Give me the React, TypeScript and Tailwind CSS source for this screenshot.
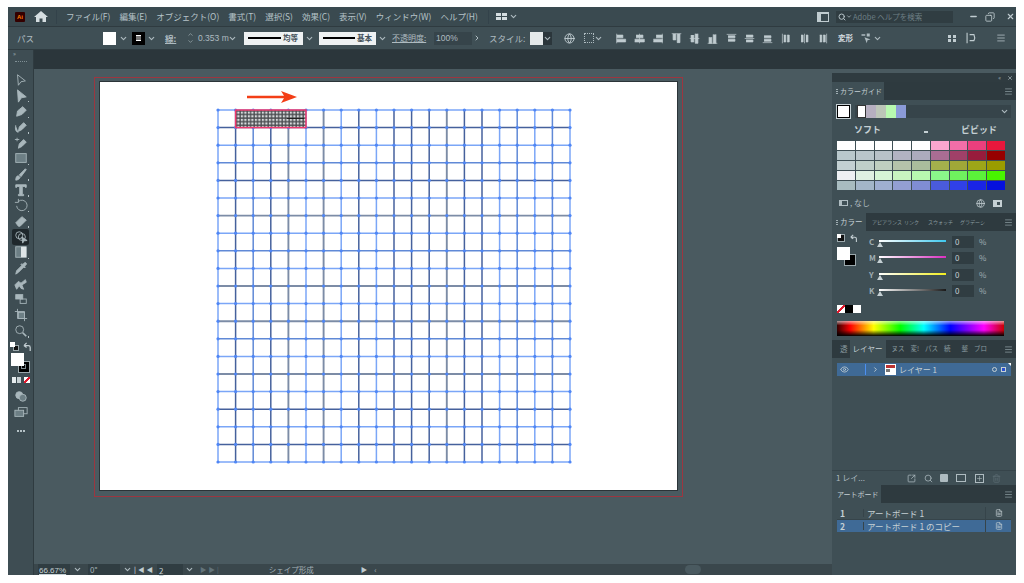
import { ChevronDown, ChevronRight, Eye, Menu, Search, Minus, X, Plus, Trash2, Copy, Globe, FileText, SquareArrowOutUpRight } from "lucide-react";

const menus = ["ファイル(F)", "編集(E)", "オブジェクト(O)", "書式(T)", "選択(S)", "効果(C)", "表示(V)", "ウィンドウ(W)", "ヘルプ(H)"];

const swatches = [
  ["#ffffff", "#ffffff", "#ffffff", "#ffffff", "#ffffff", "#f9a6cf", "#f26ea8", "#ea3f7d", "#e8173c"],
  ["#b9c8cc", "#b9c6cb", "#b8c2c8", "#b2b3c2", "#acabbd", "#a96d93", "#a04068", "#981c3c", "#960000"],
  ["#c3d0d2", "#bfcfc9", "#bfcfc0", "#b5c3aa", "#aabd9c", "#a4b04c", "#a0a838", "#9da618", "#9a9c00"],
  ["#eef0f3", "#dff0e2", "#d6f5d6", "#c8f5c0", "#b8f9b0", "#8af78a", "#6ff25e", "#5bf23a", "#48f400"],
  ["#a8bcc0", "#a3b6c8", "#9fafd0", "#939fd3", "#808dd4", "#4a5bdc", "#3040e8", "#1a24e6", "#0510de"],
];

const lineStyle: Record<string, { c: string; w: number }> = {
  l: { c: "#7ba6f7", w: 1.5 },
  m: { c: "#6089d6", w: 1.5 },
  d: { c: "#46619c", w: 1.5 },
  g: { c: "#7c8ca6", w: 1.9 },
};
const vKinds = "ldmdglglmlddlgdmlmlml".split("");
vKinds[1] = "d"; vKinds[8] = "d"; vKinds[10] = "d"; vKinds[12] = "d"; vKinds[14] = "d"; vKinds[15] = "d";
const hKinds = "ldlmdlglmlglgmlglmldl".split("");
hKinds[1] = "d"; hKinds[4] = "d"; hKinds[17] = "d"; hKinds[19] = "d";

const STEP = 17.6;
const GX = 118;
const GY = 28;

function ArtworkGrid() {
  const idx = Array.from({ length: 21 }, (_, i) => i);
  return (
    <svg width="577" height="408" viewBox="0 0 577 408" className="block">
      <defs>
        <pattern id="dots" width="3.5" height="3.6" patternUnits="userSpaceOnUse">
          <rect width="3.5" height="3.6" fill="#4a4c50" />
          <rect x="0.8" y="0.8" width="2.2" height="2.2" fill="#d8dadc" />
        </pattern>
      </defs>
      {idx.map((i) => {
        const s = lineStyle[vKinds[i]];
        return <line key={"v" + i} x1={GX + i * STEP} x2={GX + i * STEP} y1={GY} y2={GY + 352} stroke={s.c} strokeWidth={s.w} />;
      })}
      {idx.map((i) => {
        const s = lineStyle[hKinds[i]];
        return <line key={"h" + i} y1={GY + i * STEP} y2={GY + i * STEP} x1={GX} x2={GX + 352} stroke={s.c} strokeWidth={s.w} />;
      })}
      {idx.map((i) =>
        idx.map((j) => <circle key={i + "-" + j} cx={GX + i * STEP} cy={GY + j * STEP} r="1.6" fill="#4f86f5" />),
      )}
      <rect x={GX + STEP} y={GY} width={STEP * 4} height={STEP} fill="url(#dots)" stroke="#f0386e" strokeWidth="1.5" />
      <line x1="187" x2="204" y1="36.5" y2="36.5" stroke="#222" strokeWidth="1" />
      <path d="M147 13.7H184L181 9L197 15L181 21L184 16.3H147Z" fill="#f33e16" />
    </svg>
  );
}

function Tool({ children, active, corner = true }: { children: React.ReactNode; active?: boolean; corner?: boolean }) {
  return (
    <div className={`relative h-[15.7px] w-[17px] flex items-center justify-center ${active ? "bg-[#1f282c] rounded-[2px]" : ""}`}>
      <svg width="14" height="14" viewBox="0 0 16 16" fill="#a9b7bc" stroke="#a9b7bc" strokeWidth="1">
        {children}
      </svg>
      {corner && <span className="absolute right-0 bottom-[1px] w-[1.5px] h-[1.5px] bg-[#b4c1c5]" />}
    </div>
  );
}

function Toolbox() {
  return (
    <div className="w-[26px] shrink-0 bg-[#3e4d53] border-r border-[#2f3b40] flex flex-col items-center">
      <div className="w-full h-[8px] pl-[5px] text-[6px] leading-[8px] text-[#9fb0b5]">»</div>
      <div className="w-[12px] h-[1px] mt-[3px] mb-[10px] border-t border-dotted border-[#7f8f95]" />
      <Tool corner={false}><path d="M4 2L13 9L8 10L5 14Z" fill="none" /></Tool>
      <Tool><path d="M4 1L14 9L8.5 10L5 15Z" /></Tool>
      <Tool><path d="M3 14L4 8L10 3L14 7L9 12Z" /></Tool>
      <Tool><path d="M5 13L6 8L11 3L14 6L9 11ZM2 6C1 10 2 14 5 14" /></Tool>
      <Tool corner={false}><path d="M5 14L6 9L11 4L14 7L9 12ZM1 4H6M3.5 2V6" /></Tool>
      <Tool><rect x="2" y="3" width="12" height="10" fill="#6d7f85" /></Tool>
      <Tool><path d="M2 15C2 12 3 10 5 10L7 12C6 14 4 15 2 15ZM6 9L13 2L14 3L8 11Z" /></Tool>
      <Tool><path d="M2 2H14V5H13L12 4H9.5V13H11V14.5H5V13H6.5V4H4L3 5H2Z" /></Tool>
      <Tool><path d="M5 4A6 6 0 1 1 3 9M5 1V5H1" fill="none" /></Tool>
      <Tool><path d="M2 10L9 3L14 7L7 14H5Z" /></Tool>
      <Tool active corner={false}><circle cx="6" cy="6" r="4" fill="none" /><circle cx="9" cy="8" r="4" fill="none" /><path d="M9 8L15 12L11 12.5L10 15Z" /></Tool>
      <Tool><rect x="2" y="2" width="12" height="12" fill="#6d7f85" /><rect x="8" y="2" width="6" height="12" fill="#dfe6e8" stroke="none" /></Tool>
      <Tool corner={false}><path d="M2 15L3 11L9 5L11 7L5 13ZM9 3L10 4L12 2C13 1 15 3 14 4L12 6L13 7L12 8L8 4Z" /></Tool>
      <Tool corner={false}><path d="M1 9L5 5L8 7L13 3L14 6L9 9L11 14L8 13L6 10L3 14Z" /></Tool>
      <Tool corner={false}><rect x="2" y="3" width="8" height="5" /><rect x="7" y="8" width="7" height="5" fill="none" /></Tool>
      <Tool corner={false}><path d="M4 1V12H15M1 4H12V15" fill="none" /><rect x="5" y="5" width="7" height="7" fill="#6d7f85" /></Tool>
      <Tool><circle cx="6.5" cy="6.5" r="4.5" fill="none" /><path d="M10 10L14 14" strokeWidth="2" /></Tool>
      <div className="w-[22px] h-[13px] mt-[1px] relative flex justify-between items-center">
        <span className="relative w-[9px] h-[9px]">
          <span className="absolute left-[3px] top-[3px] w-[6px] h-[6px] bg-[#111] border border-[#9aa7ab]" />
          <span className="absolute left-0 top-0 w-[5px] h-[5px] bg-white" />
        </span>
        <svg width="9" height="9" viewBox="0 0 10 10" fill="none" stroke="#c2cdd1" strokeWidth="1.4"><path d="M1 4L4 1M1 4L4 6M1 4H6Q8 4 8 6V10" /></svg>
      </div>
      <div className="relative w-[22px] h-[20px]">
        <span className="absolute left-[8px] top-[8px] w-[12px] h-[12px] bg-black border border-[#9aa7ab] flex items-center justify-center">
          <span className="block w-[5px] h-[5px] border border-[#7c8a8f]" />
        </span>
        <span className="absolute left-[1px] top-0 w-[13px] h-[13px] bg-white" />
      </div>
      <div className="flex gap-[1px] mt-[4px] h-[6px] items-stretch">
        <span className="w-[4px] bg-[#e6ecee]" />
        <span className="w-[4px] bg-[#c9d2d5]" />
        <span className="w-[1px]" />
        <span className="w-[6px] bg-[linear-gradient(135deg,white_38%,#e01a2e_38%,#e01a2e_62%,white_62%)]" />
      </div>
      <div className="mt-[5px]"><Tool corner={false}><circle cx="6" cy="7" r="4" /><circle cx="10" cy="10" r="4" fill="#6d7f85" /></Tool></div>
      <div className="mt-[1px]"><Tool corner={false}><rect x="5" y="3" width="10" height="7" fill="none" /><rect x="1" y="6" width="10" height="7" fill="#6d7f85" /></Tool></div>
      <div className="mt-[10px] flex gap-[1px]">
        <span className="w-[2px] h-[2px] bg-[#b4c1c5]" />
        <span className="w-[2px] h-[2px] bg-[#b4c1c5]" />
        <span className="w-[2px] h-[2px] bg-[#b4c1c5]" />
      </div>
    </div>
  );
}

function Chev({ className = "" }: { className?: string }) {
  return <ChevronDown size={9} strokeWidth={3} className={`shrink-0 text-[#aebbc0] ${className}`} />;
}

function StrokeBox({ label, w, line }: { label: string; w: string; line: string }) {
  return (
    <div className={`${w} h-[13px] bg-[#eef1f2] flex items-center px-[4px] gap-[2px]`}>
      <span className={`${line} shrink-0 h-[2px] bg-black`} />
      <span className="text-[7.5px] text-[#44525a] font-bold leading-none whitespace-nowrap">{label}</span>
    </div>
  );
}

const alignIcons = [
  "M1 1V15M1 3H10V7H1M1 9H14V13H1",
  "M8 1V15M3 3H13V7H3M1 9H15V13H1",
  "M15 1V15M6 3H15V7H6M2 9H15V13H2",
  "M1 1H15M3 1V10H7V1M9 1V14H13V1",
  "M1 8H15M3 3V13H7V3M9 1V15H13V1",
  "M1 15H15M3 6V15H7V6M9 2V15H13V2",
  "M1 2H15M3 4H13V7H3M3 9H13V12H3",
  "M1 8H15M3 3H13V6H3M3 10H13V13H3",
  "M1 14H15M3 4H13V7H3M3 9H13V12H3",
  "M2 1V15M4 3H7V13H4M9 3H12V13H9",
  "M8 1V15M3 3H6V13H3M10 3H13V13H10",
  "M14 1V15M4 3H7V13H4M9 3H12V13H9",
];

function ControlBar() {
  return (
    <div className="h-[23px] shrink-0 bg-[#3f4f55] border-b border-[#2f3b40] flex items-center text-[8.5px] text-[#aebbc0] relative">
      <span className="w-[95px] pl-[9px]">パス</span>
      <span className="w-[13px] h-[13px] bg-white" />
      <Chev className="ml-[3px]" />
      <span className="ml-[4px] w-[13px] h-[13px] bg-black flex items-center justify-center">
        <span className="w-[5px] h-[6px] border-y border-white bg-[#777]" />
      </span>
      <Chev className="ml-[2px]" />
      <span className="ml-[9px] w-[16px] underline font-bold">線:</span>
      <span className="ml-[5px] w-[8px] flex flex-col items-center text-[6px] leading-[6px]">
        <ChevronDown size={7} className="rotate-180" />
        <ChevronDown size={7} />
      </span>
      <span className="ml-[4px] w-[29px] whitespace-nowrap font-['Liberation_Sans',sans-serif]">0.353 m</span>
      <Chev className="ml-[1px]" />
      <span className="ml-[7px]"><StrokeBox label="均等" w="w-[59px]" line="w-[33px]" /></span>
      <Chev className="ml-[2px]" />
      <span className="ml-[5px]"><StrokeBox label="基本" w="w-[57px]" line="w-[32px]" /></span>
      <Chev className="ml-[2px]" />
      <span className="ml-[5px] w-[38px] underline whitespace-nowrap text-[8px]">不透明度:</span>
      <span className="ml-[4px] w-[38px] h-[13px] bg-[#36444a] pl-[2px] leading-[13px] font-['Liberation_Sans',sans-serif]">100%</span>
      <ChevronRight size={8} strokeWidth={3} className="ml-[1px]" />
      <span className="ml-[8px] w-[41px] whitespace-nowrap">スタイル:</span>
      <span className="w-[13px] h-[13px] bg-[#e4e9ea]" />
      <span className="w-[9px] h-[13px] bg-[#2b363b] flex items-center justify-center"><Chev /></span>
      <Globe size={11} className="ml-[12px] text-[#c0ccd0]" />
      <span className="ml-[9px] w-[10px] h-[10px] border border-dotted border-[#aebbc0]" />
      <Chev className="mr-[13px]" />
      <div className="flex">
        {alignIcons.map((d, i) => (
          <svg key={d} width="11" height="11" viewBox="0 0 16 16" fill="#c0ccd0" stroke="#c0ccd0" className={i === 2 || i === 5 || i === 8 ? "mr-[8px]" : "mr-[7px]"}>
            <path d={d} />
          </svg>
        ))}
      </div>
      <span className="ml-[3px] w-[15px] text-[7.5px] font-bold text-[#d5dde0]">変形</span>
      <svg width="12" height="12" viewBox="0 0 16 16" className="ml-[7px]" fill="#aebbc0"><path d="M2 3H7V5H2ZM9 2H13V6H9ZM6 7L14 10L10 11L9 15Z" /></svg>
      <Chev className="ml-[1px]" />
      <span className="ml-[66px] grid grid-cols-2 gap-[1px] w-[8px]">
        <i className="w-[3px] h-[3px] bg-[#c0ccd0]" /><i className="w-[3px] h-[3px] bg-[#c0ccd0]" /><i className="w-[3px] h-[3px] bg-[#c0ccd0]" /><i className="w-[3px] h-[3px] bg-[#c0ccd0]" />
      </span>
      <svg width="11" height="12" viewBox="0 0 12 14" className="ml-[9px]" fill="none" stroke="#c0ccd0" strokeWidth="1.3"><path d="M2 1V13M5 3H10L11 7L10 10H5" /></svg>
      <Menu size={10} className="ml-[20px] text-[#aebbc0]" />
    </div>
  );
}

function TitleBar() {
  return (
    <div className="h-[20px] shrink-0 bg-[#3a4a50] border-b border-[#2f3b40] flex items-center text-[8.5px] text-[#b6c3c8]">
      <span className="ml-[7px] w-[10px] h-[10px] rounded-[1px] bg-[#330000] text-[#ff7c00] text-[6px] leading-[10px] text-center font-bold font-['Liberation_Sans',sans-serif]">Ai</span>
      <svg width="14" height="13" viewBox="0 0 14 13" className="ml-[9px]" fill="#d5dde0"><path d="M7 1L14 7H12V12H8.5V8.5H5.5V12H2V7H0Z" /></svg>
      <span className="ml-[8px] mr-[9px] w-[1px] h-[14px] bg-[#33424a]" />
      <div className="flex gap-[9px] whitespace-nowrap w-[414px]">
        {menus.map((m) => <span key={m}>{m}</span>)}
      </div>
      <span className="ml-[8px] mr-[7px] w-[1px] h-[14px] bg-[#33424a]" />
      <span className="grid grid-cols-2 gap-[1px] w-[11px]">
        <i className="h-[3px] bg-[#d5dde0]" /><i className="h-[3px] bg-[#d5dde0]" /><i className="h-[3px] bg-[#d5dde0]" /><i className="h-[3px] bg-[#d5dde0]" />
      </span>
      <Chev className="ml-[2px]" />
      <span className="ml-[299px] w-[12px] h-[10px] border border-[#c0ccd0] border-l-[4px] border-t-[2px]" />
      <div className="ml-[7px] w-[117px] h-[12px] bg-[#303d42] flex items-center pl-[2px] text-[7.5px] text-[#6d7f85] whitespace-nowrap">
        <Search size={8} strokeWidth={3} className="text-[#b6c3c8]" />
        <Chev className="w-[6px]" />
        <span className="ml-[1px]">Adobe ヘルプを検索</span>
      </div>
      <Minus size={9} strokeWidth={4} className="ml-[16px] text-[#c0ccd0]" />
      <Copy size={10} className="ml-[7px] text-[#c0ccd0] -scale-x-100" />
      <X size={9} strokeWidth={3} className="ml-[11px] text-[#c0ccd0]" />
    </div>
  );
}

function StatusBar() {
  return (
    <div className="h-[11px] shrink-0 bg-[#3a474c] flex items-center text-[8px] text-[#a4b2b7] relative">
      <span className="ml-[4px] w-[32px] h-full bg-[#303d42] pl-[1px] leading-[14px] underline text-[#c5d0d4] font-['Liberation_Sans',sans-serif]">66.67%</span>
      <Chev className="ml-[3px]" />
      <span className="ml-[6px] w-[32px] h-full bg-[#303d42] pl-[2px] leading-[11px]">0°</span>
      <Chev className="ml-[3px]" />
      <span className="ml-[2px] text-[6.5px] font-bold text-[#c0ccd0] tracking-[2px] whitespace-nowrap">|◀◀</span>
      <span className="ml-[2px] w-[26px] h-full bg-[#303d42] pl-[2px] leading-[14px] underline text-[#c5d0d4]">2</span>
      <Chev className="ml-[2px]" />
      <span className="ml-[6px] text-[6.5px] text-[#62737a] tracking-[2px] whitespace-nowrap">▶▶|</span>
      <span className="ml-[48px] w-[92px] text-[7.5px]">シェイプ形成</span>
      <span className="text-[6.5px] text-[#c0ccd0]">▶</span>
      <span className="ml-[7px] text-[8px]">‹</span>
      <span className="absolute left-[651px] top-[1px] w-[16px] h-[9px] rounded-full bg-[#4a5a60]" />
    </div>
  );
}

function Grip() {
  return (
    <span className="mr-[2px] flex flex-col gap-[1px] shrink-0">
      <i className="block w-[2px] h-[1px] bg-[#9fadb2]" />
      <i className="block w-[2px] h-[1px] bg-[#9fadb2]" />
      <i className="block w-[2px] h-[1px] bg-[#9fadb2]" />
    </span>
  );
}

function Tab({ children, active, w }: { children: React.ReactNode; active?: boolean; w?: string }) {
  return (
    <span className={`h-full flex items-center whitespace-nowrap ${w ?? ""} ${active ? "bg-[#3f4f55] text-[#c5d0d4]" : "text-[#8a9a9f]"}`}>
      {children}
    </span>
  );
}

function TabBar({ children }: { children: React.ReactNode }) {
  return (
    <div className="h-[18px] shrink-0 bg-[#2e3a3f] flex items-center text-[7.5px] pr-[3px]">
      {children}
      <Menu size={9} className="ml-auto text-[#8a9a9f]" />
    </div>
  );
}

function ColorSlider({ label, track }: { label: string; track: string }) {
  return (
    <div className="flex items-center h-[16.3px] text-[8px] text-[#9fadb2]">
      <span className="w-[9px] font-bold">{label}</span>
      <div className="relative ml-[1px] w-[67px] h-[10px]">
        <span className={`absolute left-0 right-0 top-[3px] h-[2px] ${track}`} />
        <span className="absolute left-[-2px] top-[5px] w-0 h-0 border-x-[3px] border-x-transparent border-b-[5px] border-b-[#c5d0d4]" />
      </div>
      <span className="ml-[6px] w-[22px] h-[12px] bg-[#303d42] pl-[3px] leading-[12px] text-[#c5d0d4]">0</span>
      <span className="ml-[5px]">%</span>
    </div>
  );
}

function RightPanel() {
  return (
    <div className="w-[184px] shrink-0 mt-[4px] bg-[#3f4f55] flex flex-col text-[8px] text-[#b6c3c8]">
      <div className="h-[9px] shrink-0 bg-[#2f3b40] flex justify-end items-center gap-[6px] pr-[3px] text-[6px] text-[#9fadb2]">
        <span>«</span><X size={6} strokeWidth={3} />
      </div>

      <TabBar><Tab active w="w-[52px] pl-[4px]"><Grip /><span className="text-[7px]">カラーガイド</span></Tab></TabBar>
      <div className="h-[113px] shrink-0 px-[5px] pt-[5px] flex flex-col">
        <div className="flex items-center">
          <span className="w-[13px] h-[13px] bg-white border border-black outline outline-[#c5d0d4]" />
          <div className="ml-[5px] flex-1 h-[13px] bg-[#36444a] flex items-center justify-between pl-[2px] pr-[2px]">
            <div className="flex h-full">
              <span className="w-[9px] bg-white border border-[#333]" />
              <span className="w-[10px] bg-[#b6afc0]" />
              <span className="w-[10px] bg-[#bcc6b8]" />
              <span className="w-[10px] bg-[#b8f9b0]" />
              <span className="w-[10px] bg-[#8b9bd8]" />
            </div>
            <Chev />
          </div>
        </div>
        <div className="h-[23px] flex items-center font-bold text-[9px] text-[#c5d0d4]">
          <span className="ml-[17px] w-[70px]">ソフト</span>
          <span className="w-[4px] h-[2px] bg-[#c5d0d4] mt-[4px]" />
          <span className="ml-[33px]">ビビッド</span>
        </div>
        <div className="grid grid-cols-9 gap-[1px] w-[168px] h-[49px]">
          {swatches.flat().map((c, i) => <span key={i} style={{ backgroundColor: c }} />)}
        </div>
        <div className="mt-[7px] flex items-center text-[#aebbc0]">
          <span className="ml-[2px] w-[9px] h-[6px] border border-[#aebbc0] border-l-[3px]" />
          <span className="ml-[2px]">, なし</span>
          <Globe size={9} className="ml-auto text-[#c5d0d4]" />
          <span className="ml-[8px] mr-[9px] w-[9px] h-[7px] border-2 border-[#c5d0d4] border-l-[4px]" />
        </div>
      </div>

      <TabBar>
        <Tab active w="w-[34px] pl-[4px]"><Grip />カラー</Tab>
        <span className="text-[#8a9a9f] text-[5px] whitespace-nowrap flex">
          <span className="ml-[6px] w-[32px]">アピアランス</span>
          <span className="w-[24px]">リンク</span>
          <span className="w-[32px]">スウォッチ</span>
          <span className="w-[30px]">グラデーシ</span>
        </span>
      </TabBar>
      <div className="h-[109px] shrink-0 relative pl-[37px] pt-[3px]">
        <span className="absolute left-[5px] top-[3px] w-[8px] h-[8px] bg-[#111] border border-[#9aa7ab]" />
        <span className="absolute left-[5px] top-[3px] w-[4px] h-[4px] bg-white" />
        <svg width="8" height="8" viewBox="0 0 10 10" fill="none" stroke="#c2cdd1" strokeWidth="1.4" className="absolute left-[18px] top-[3px]"><path d="M1 4L4 1M1 4L4 6M1 4H6Q8 4 8 6V10" /></svg>
        <span className="absolute left-[12px] top-[23px] w-[12px] h-[12px] bg-black border border-[#9aa7ab]" />
        <span className="absolute left-[5px] top-[16px] w-[13px] h-[13px] bg-white" />
        <ColorSlider label="C" track="bg-[linear-gradient(to_right,white,#3fc8ee)]" />
        <ColorSlider label="M" track="bg-[linear-gradient(to_right,white,#d92fc0)]" />
        <ColorSlider label="Y" track="bg-[linear-gradient(to_right,white,#f2ee20)]" />
        <ColorSlider label="K" track="bg-[linear-gradient(to_right,white,#1a1a1a)]" />
        <div className="absolute left-[5px] top-[74px] flex">
          <span className="w-[8px] h-[8px] bg-[linear-gradient(135deg,white_38%,#e01a2e_38%,#e01a2e_62%,white_62%)]" />
          <span className="w-[8px] h-[8px] bg-black" />
          <span className="w-[8px] h-[8px] bg-white" />
        </div>
        <div className="absolute left-[5px] top-[90px] w-[167px] h-[15px] bg-[linear-gradient(to_bottom,#ffffff99,transparent_30%,transparent_60%,#000_100%),linear-gradient(to_right,#300,#f00_8%,#ff0_22%,#0f0_38%,#0ff_52%,#00f_68%,#f0f_88%,#c00)]" />
      </div>

      <TabBar>
        <span className="ml-[8px] text-[#8a9a9f]">透</span>
        <Tab active w="w-[36px] ml-[2px] justify-center">レイヤー</Tab>
        <span className="ml-[6px] flex gap-[6px] text-[#8a9a9f] text-[6.5px] whitespace-nowrap">
          <span>ヌス</span><span>変!</span><span>パス</span><span>続</span><span className="ml-[5px]">整</span><span>ブロ</span>
        </span>
      </TabBar>
      <div className="flex-1 min-h-0 pt-[5px] px-[5px] flex flex-col">
        <div className="h-[13px] bg-[#3f6a96] flex items-center text-[8px] text-[#c5d0d4] relative">
          <Eye size={9} className="ml-[3px]" />
          <span className="ml-[16px] w-[1px] h-[11px] bg-[#4d90f0]" />
          <ChevronRight size={7} strokeWidth={3} className="ml-[6px]" />
          <span className="ml-[6px] w-[11px] h-[11px] bg-white flex flex-col p-[1px] gap-[1px]">
            <i className="h-[3px] bg-[#b33]" />
            <i className="h-[3px] w-[4px] bg-[#777]" />
          </span>
          <span className="ml-[3px]">レイヤー 1</span>
          <span className="ml-auto w-[5px] h-[5px] rounded-full border border-[#c5d0d4]" />
          <span className="ml-[4px] mr-[5px] w-[5px] h-[5px] border border-[#c5d0d4] bg-[#2a50d0]" />
          <span className="absolute right-0 top-0 border-l-[3px] border-l-transparent border-t-[3px] border-t-white" />
        </div>
        <div className="flex-1" />
        <div className="h-[15px] -mx-[5px] border-t border-[#36444a] flex items-center pl-[4px] text-[#aebbc0]">
          <span className="w-[71px]">1 レイ...</span>
          <SquareArrowOutUpRight size={9} />
          <Search size={9} className="ml-[8px]" />
          <span className="ml-[7px] w-[8px] h-[8px] bg-[#aebbc0] rounded-[1px]" />
          <span className="ml-[8px] w-[10px] h-[8px] border border-[#aebbc0]" />
          <Plus size={9} className="ml-[9px] border border-[#aebbc0]" />
          <Trash2 size={9} className="ml-[8px] text-[#5d6e74]" />
        </div>
      </div>

      <div className="h-[90px] shrink-0 flex flex-col">
        <div className="h-[18px] bg-[#2e3a3f] flex items-center text-[7px] pr-[3px]">
          <Tab active w="w-[49px] pl-[5px]">アートボード</Tab>
          <Menu size={9} className="ml-auto text-[#8a9a9f]" />
        </div>
        <div className="px-[5px] pt-[4px] text-[8.5px] text-[#c5d0d4]">
          <ArtboardRow n="1" name="アートボード 1" />
          <ArtboardRow n="2" name="アートボード 1 のコピー" selected />
        </div>
      </div>
    </div>
  );
}

function ArtboardRow({ n, name, selected }: { n: string; name: string; selected?: boolean }) {
  return (
    <div className={`h-[12.5px] flex items-center leading-none ${selected ? "bg-[#3f6a96]" : "border-b border-[#36444a]"}`}>
      <span className="w-[26px] pl-[3px] font-bold">{n}</span>
      <span className="flex-1 border-l border-[#36444a] pl-[3px]">{name}</span>
      <span className="w-[26px] h-full border-l border-[#36444a] flex items-center justify-center">
        <FileText size={8} />
      </span>
    </div>
  );
}

export default function App() {
  return (
    <div className="w-[1024px] h-[583px] overflow-hidden bg-white pt-[7px] pl-[8px] pr-[8px] pb-[8px] font-['Noto_Sans_CJK_JP','Noto_Sans',sans-serif]">
      <div className="w-full h-full flex flex-col">
        <TitleBar />
        <ControlBar />
        <div className="flex-1 min-h-0 flex">
          <Toolbox />
          <div className="flex-1 min-w-0 flex flex-col">
            <div className="h-[19px] shrink-0 bg-[#2b363b]" />
            <div className="flex-1 min-h-0 flex bg-[#4a5a60]">
              <div className="flex-1 min-w-0 flex flex-col">
                <div className="flex-1 min-h-0 pl-[60px] pt-[8px]">
                  <div className="w-[589px] h-[420px] border border-[#9c3640] pl-[5px] pt-[4px]">
                    <div className="w-[577px] h-[408px] bg-white shadow-[0_0_0_1px_#2b3438]">
                      <ArtworkGrid />
                    </div>
                  </div>
                </div>
                <StatusBar />
              </div>
              <RightPanel />
            </div>
          </div>
        </div>
      </div>
    </div>
  );
}
